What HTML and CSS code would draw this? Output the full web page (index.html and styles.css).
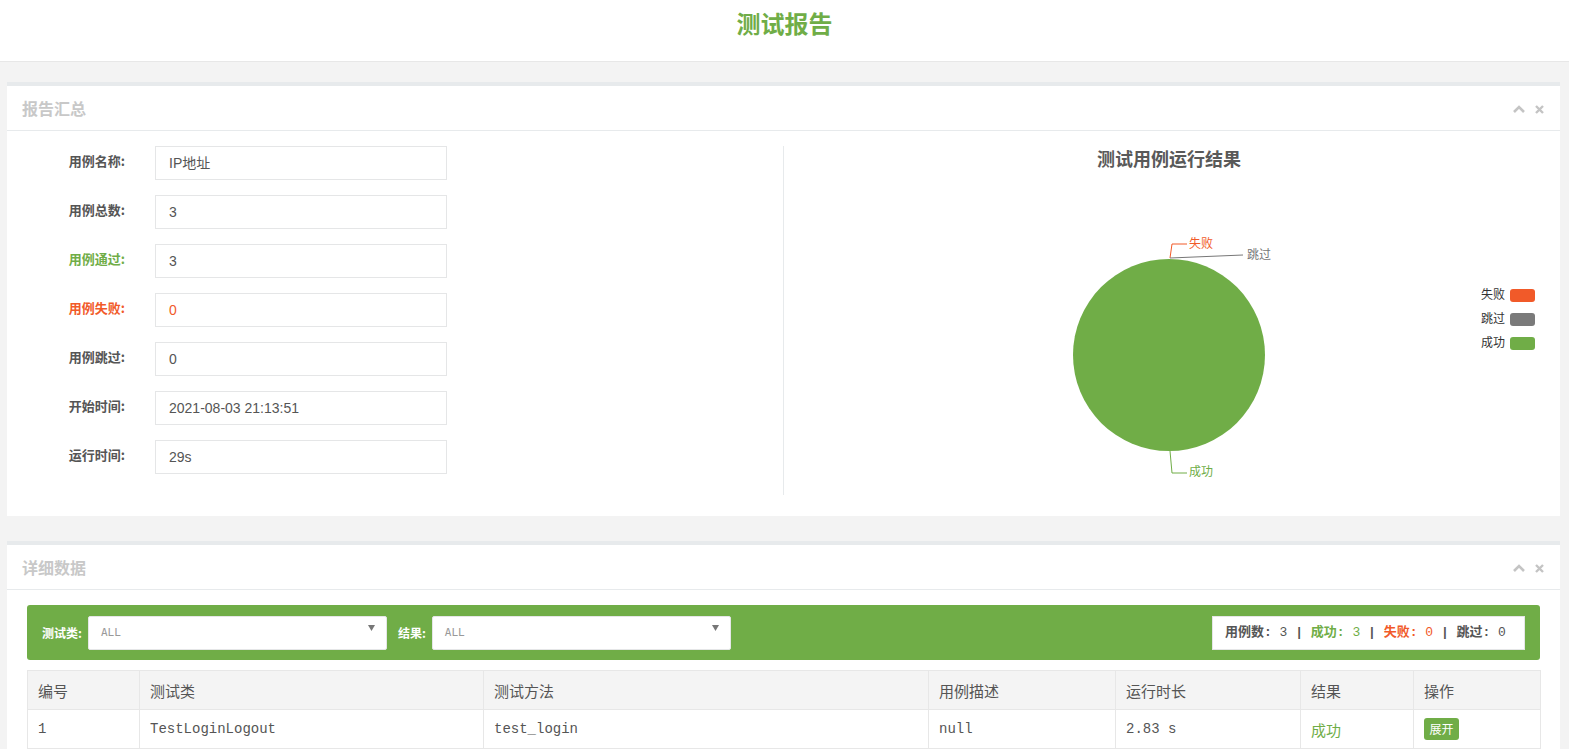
FILE: index.html
```html
<!DOCTYPE html>
<html lang="zh">
<head>
<meta charset="utf-8">
<title>测试报告</title>
<link rel="stylesheet" href="styles.css">
</head>
<body>
<header class="page-header">
  <h1 class="page-title">测试报告</h1>
</header>

<section class="panel panel-summary">
  <div class="panel-head">
    <h2 class="panel-title">报告汇总</h2>
    <div class="panel-tools">
      <svg class="tool-icon" width="12" height="8" viewBox="0 0 12 8"><path d="M1 7 L6 2 L11 7" fill="none" stroke="#c4c4c4" stroke-width="2.6"/></svg>
      <svg class="tool-icon" width="9" height="9" viewBox="0 0 9 9"><path d="M1 1 L8 8 M8 1 L1 8" fill="none" stroke="#c4c4c4" stroke-width="2.4"/></svg>
    </div>
  </div>
  <div class="panel-body summary-body">
    <div class="summary-form">
      <div class="form-row"><label class="form-label">用例名称:</label><div class="form-input">IP地址</div></div>
      <div class="form-row"><label class="form-label">用例总数:</label><div class="form-input">3</div></div>
      <div class="form-row"><label class="form-label is-pass">用例通过:</label><div class="form-input">3</div></div>
      <div class="form-row"><label class="form-label is-fail">用例失败:</label><div class="form-input is-fail">0</div></div>
      <div class="form-row"><label class="form-label">用例跳过:</label><div class="form-input">0</div></div>
      <div class="form-row"><label class="form-label">开始时间:</label><div class="form-input">2021-08-03 21:13:51</div></div>
      <div class="form-row"><label class="form-label">运行时间:</label><div class="form-input">29s</div></div>
    </div>
    <div class="summary-chart">
      <svg class="chart" width="776" height="348" viewBox="0 0 776 348">
        <text class="chart-title" x="385" y="20" text-anchor="middle">测试用例运行结果</text>
        <circle cx="385" cy="209" r="96" fill="#70ad47"/>
        <polyline points="386,112 388,98 403,98" fill="none" stroke="#f15a29" stroke-width="1"/>
        <text class="chart-label" x="405" y="102" fill="#f15a29">失败</text>
        <polyline points="386,112 459,109" fill="none" stroke="#777777" stroke-width="1"/>
        <text class="chart-label" x="463" y="113" fill="#777777">跳过</text>
        <polyline points="386,305 388,327 403,327" fill="none" stroke="#70ad47" stroke-width="1"/>
        <text class="chart-label" x="405" y="330" fill="#70ad47">成功</text>
        <text class="legend-text" x="721" y="153" text-anchor="end">失败</text>
        <rect x="726" y="143" width="25" height="13" rx="3" fill="#f15a29"/>
        <text class="legend-text" x="721" y="177" text-anchor="end">跳过</text>
        <rect x="726" y="167" width="25" height="13" rx="3" fill="#7a7a7a"/>
        <text class="legend-text" x="721" y="201" text-anchor="end">成功</text>
        <rect x="726" y="191" width="25" height="13" rx="3" fill="#70ad47"/>
      </svg>
    </div>
  </div>
</section>

<section class="panel panel-detail">
  <div class="panel-head">
    <h2 class="panel-title">详细数据</h2>
    <div class="panel-tools">
      <svg class="tool-icon" width="12" height="8" viewBox="0 0 12 8"><path d="M1 7 L6 2 L11 7" fill="none" stroke="#c4c4c4" stroke-width="2.6"/></svg>
      <svg class="tool-icon" width="9" height="9" viewBox="0 0 9 9"><path d="M1 1 L8 8 M8 1 L1 8" fill="none" stroke="#c4c4c4" stroke-width="2.4"/></svg>
    </div>
  </div>
  <div class="panel-body detail-body">
    <div class="filter-bar">
      <div class="filter-group">
        <span class="filter-label">测试类:</span>
        <div class="select"><span>ALL</span><svg class="select-arrow" width="7" height="6" viewBox="0 0 7 6"><path d="M0 0 H7 L3.5 6 Z" fill="#777"/></svg></div>
      </div>
      <div class="filter-group">
        <span class="filter-label">结果:</span>
        <div class="select"><span>ALL</span><svg class="select-arrow" width="7" height="6" viewBox="0 0 7 6"><path d="M0 0 H7 L3.5 6 Z" fill="#777"/></svg></div>
      </div>
      <div class="stats">用例数: <span class="num">3</span> | <span class="is-pass">成功: <span class="num">3</span></span> | <span class="is-fail">失败: <span class="num">0</span></span> | 跳过: <span class="num">0</span></div>
    </div>
    <table class="result-table">
      <colgroup>
        <col style="width:112px"><col style="width:344px"><col style="width:445px"><col style="width:187px"><col style="width:185px"><col style="width:113px"><col style="width:127px">
      </colgroup>
      <thead>
        <tr><th>编号</th><th>测试类</th><th>测试方法</th><th>用例描述</th><th>运行时长</th><th>结果</th><th>操作</th></tr>
      </thead>
      <tbody>
        <tr><td>1</td><td>TestLoginLogout</td><td>test_login</td><td>null</td><td>2.83 s</td><td class="cell-result">成功</td><td><span class="btn-expand">展开</span></td></tr>
      </tbody>
    </table>
  </div>
</section>
</body>
</html>
```

FILE: styles.css
```css
html, body {
  margin: 0;
  padding: 0;
}
body {
  background: #f3f3f3;
  font-family: "Liberation Sans", "Noto Sans CJK SC", sans-serif;
  color: #555;
}
.page-header {
  height: 61px;
  background: #fff;
  border-bottom: 1px solid #e7e7e7;
}
.page-title {
  margin: 0;
  padding-top: 6px;
  line-height: 34px;
  text-align: center;
  font-size: 24px;
  font-weight: bold;
  color: #70ad47;
  font-family: "Noto Sans CJK SC", sans-serif;
}
.panel {
  margin: 20px 9px 0 7px;
  background: #fff;
  border-top: 4px solid #e7eaec;
}
.panel-detail {
  margin-top: 25px;
}
.panel-head {
  height: 44px;
  border-bottom: 1px solid #e7eaec;
  display: flex;
  align-items: center;
  justify-content: space-between;
  padding: 0 15px;
}
.panel-title {
  margin: 0;
  font-size: 16px;
  font-weight: bold;
  color: #c8c8c8;
  font-family: "Noto Sans CJK SC", sans-serif;
}
.panel-tools {
  display: flex;
  align-items: center;
  gap: 10px;
  padding-right: 1px;
  padding-top: 2px;
}
.tool-icon {
  display: block;
}
.summary-body {
  display: flex;
  padding: 15px 0 21px;
}
.summary-form {
  width: 777px;
  border-right: 1px solid #e7eaec;
  padding: 0 0 21px;
  box-sizing: border-box;
}
.form-row {
  display: flex;
  align-items: center;
  height: 34px;
  margin-bottom: 15px;
}
.form-row:last-child {
  margin-bottom: 0;
}
.form-label {
  width: 118px;
  margin-right: 30px;
  text-align: right;
  font-size: 13px;
  font-weight: bold;
  color: #555;
  font-family: "Noto Sans CJK SC", sans-serif;
  position: relative;
  top: -3px;
}
.form-input {
  width: 292px;
  height: 34px;
  box-sizing: border-box;
  border: 1px solid #e5e6e7;
  padding: 0 13px;
  font-size: 14px;
  line-height: 32px;
  color: #555;
}
.is-pass { color: #70ad47; }
.is-fail { color: #f15a29; }
.form-label.is-pass { color: #70ad47; }
.form-label.is-fail { color: #f15a29; }
.summary-chart {
  flex: 1;
}
.chart {
  display: block;
}
.chart-title {
  font-family: "Noto Sans CJK SC", sans-serif;
  font-size: 18px;
  font-weight: bold;
  fill: #595959;
}
.chart-label {
  font-family: "Noto Sans CJK SC", sans-serif;
  font-size: 12px;
}
.legend-text {
  font-family: "Noto Sans CJK SC", sans-serif;
  font-size: 12px;
  fill: #333;
}
.detail-body {
  padding: 15px 20px 20px;
}
.filter-bar {
  height: 55px;
  background: #70ad47;
  border-radius: 3px;
  display: flex;
  align-items: center;
  padding: 0 15px 0 15px;
}
.filter-group {
  display: flex;
  align-items: center;
  margin-right: 11px;
}
.filter-label {
  font-size: 12px;
  font-weight: bold;
  color: #fff;
  font-family: "Noto Sans CJK SC", sans-serif;
  margin-right: 6px;
}
.select {
  width: 299px;
  height: 34px;
  box-sizing: border-box;
  background: #fff;
  border: 1px solid #e5e6e7;
  border-radius: 2px;
  display: flex;
  align-items: center;
  justify-content: space-between;
  padding: 0 11px 0 12px;
  font-family: "DejaVu Sans Mono", monospace;
  font-size: 11px;
  color: #999;
}
.select-arrow {
  position: relative;
  top: -5px;
}
.stats {
  margin-left: auto;
  width: 313px;
  height: 34px;
  box-sizing: border-box;
  background: #fff;
  border: 1px solid #e5e6e7;
  padding: 0 12px;
  line-height: 32px;
  font-family: "Liberation Mono", "Noto Sans CJK SC", monospace;
  font-size: 13px;
  font-weight: bold;
  color: #555;
  white-space: nowrap;
}
.stats .num {
  font-weight: normal;
}
.result-table {
  margin-top: 10px;
  width: 1513px;
  border-collapse: collapse;
  table-layout: fixed;
}
.result-table th,
.result-table td {
  border: 1px solid #e7e7e7;
  padding: 0 10px;
  text-align: left;
  height: 38px;
}
.result-table th {
  background: #f4f4f4;
  font-family: "Noto Sans CJK SC", sans-serif;
  font-size: 15px;
  font-weight: normal;
  color: #555;
}
.result-table td {
  font-family: "Liberation Mono", "Noto Sans CJK SC", monospace;
  font-size: 14px;
  color: #555;
}
.result-table td.cell-result {
  font-family: "Noto Sans CJK SC", sans-serif;
  font-size: 15px;
  color: #70ad47;
}
.btn-expand {
  display: inline-block;
  width: 35px;
  height: 22px;
  line-height: 22px;
  text-align: center;
  background: #70ad47;
  color: #fff;
  border-radius: 3px;
  font-family: "Noto Sans CJK SC", sans-serif;
  font-size: 12px;
}
```
